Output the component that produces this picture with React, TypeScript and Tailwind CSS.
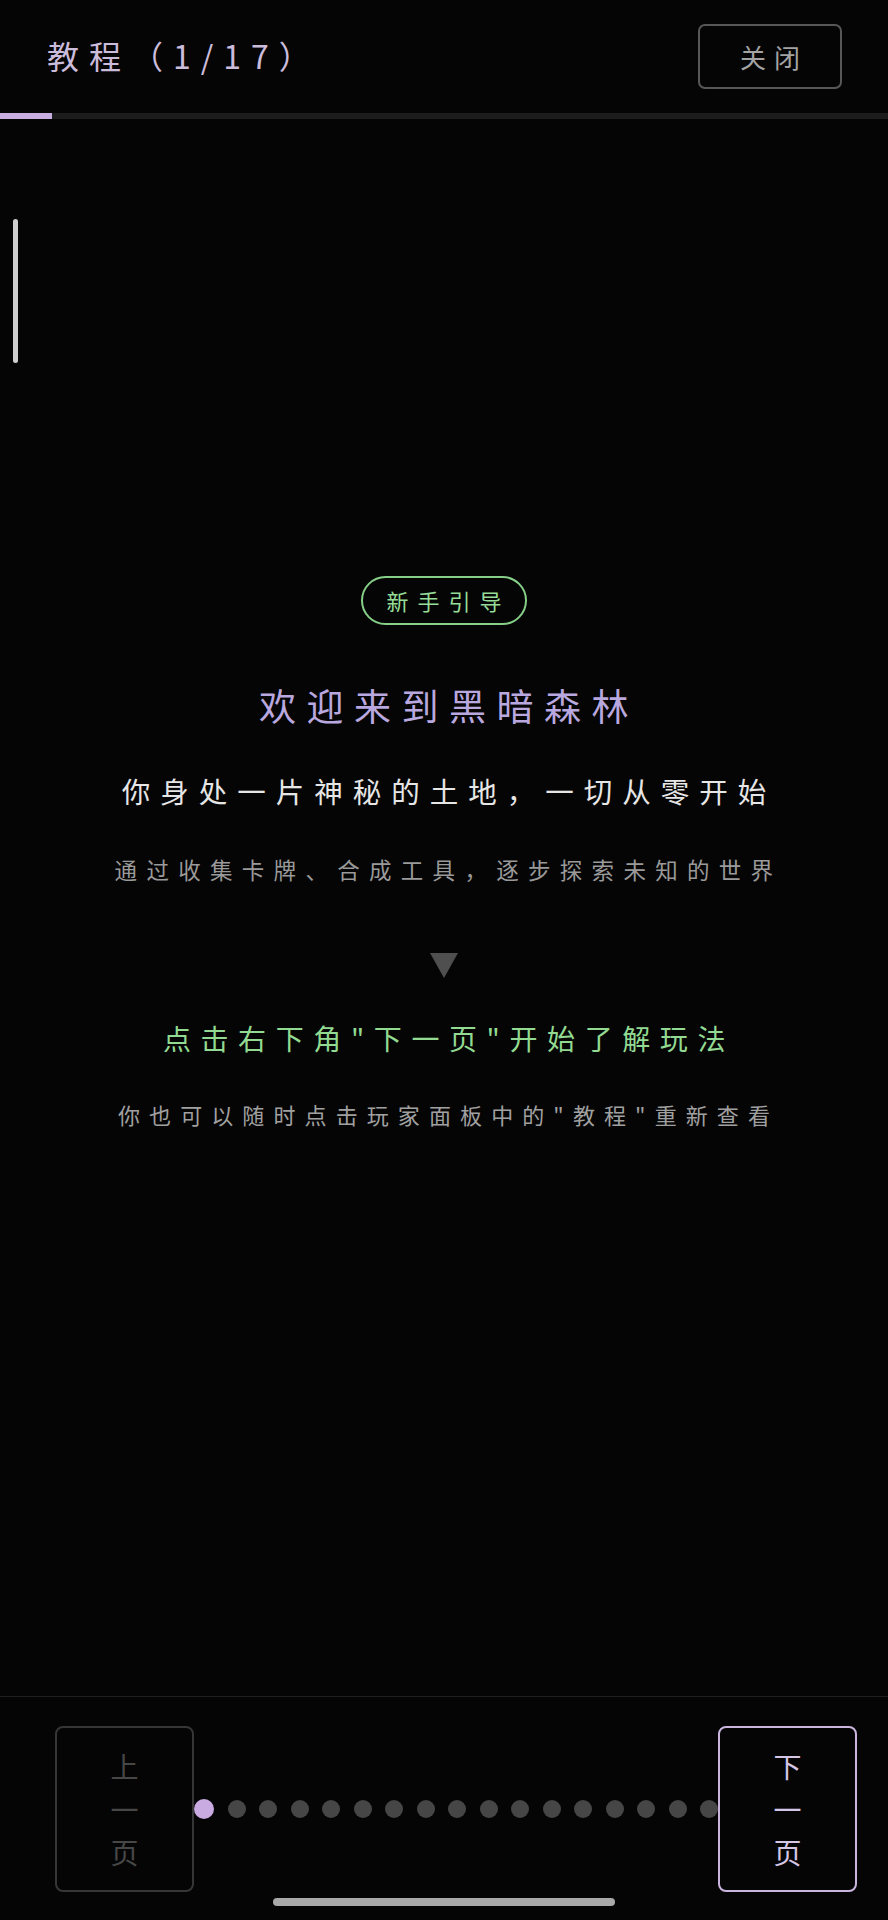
const TOTAL = 17;
const CURRENT = 1;

const cjk = '"Noto Sans CJK SC", "Noto Sans", sans-serif';

function StackedLabel({ text, className }: { text: string; className: string }) {
  return (
    <div className={`flex flex-col items-center text-[28px] leading-[43px] ${className}`}>
      {text.split('').map((ch, i) => (
        <span key={i}>{ch}</span>
      ))}
    </div>
  );
}

function PageDots({ total, current }: { total: number; current: number }) {
  return (
    <div className="flex min-w-0 flex-1 items-center gap-[13.5px] overflow-hidden">
      {Array.from({ length: total }, (_, i) =>
        i + 1 === current ? (
          <span key={i} className="h-[20px] w-[20px] shrink-0 rounded-full bg-[#c9abe2]" />
        ) : (
          <span key={i} className="h-[18px] w-[18px] shrink-0 rounded-full bg-[#464646]" />
        )
      )}
    </div>
  );
}

export default function App() {
  const progress = (CURRENT / TOTAL) * 100;

  return (
    <div className="relative flex h-[1920px] w-full flex-col overflow-hidden bg-[#050505]" style={{ fontFamily: cjk }}>
      {/* header */}
      <header className="flex h-[113px] items-center justify-between pl-[47px] pr-[46px]">
        <h1 className="-mt-[4px] text-[32px] tracking-[10px] text-[#cbbcdc]">
          教程（{CURRENT}/{TOTAL}）
        </h1>
        <button className="flex h-[65px] w-[144px] items-center justify-center rounded-[7px] border-2 border-[#575757] text-[26px] tracking-[8px] text-[#a3a3a3]">
          <span className="pl-[8px]">关闭</span>
        </button>
      </header>

      {/* progress track */}
      <div className="h-[6px] w-full bg-[#1c1c1c]">
        <div className="h-full bg-[#c8ade0]" style={{ width: `${progress}%` }} />
      </div>

      {/* page content */}
      <main className="relative flex flex-1 flex-col items-center pt-[457px]">
        <span className="absolute left-[13px] top-[100px] h-[144px] w-[5px] rounded-full bg-[#cfcfcf]" />

        <div className="flex h-[49px] w-[166px] items-center justify-center rounded-full border-2 border-[#86cf88] text-[22px] tracking-[9px] text-[#97dc98]">
          <span className="pl-[9px]">新手引导</span>
        </div>

        <h2 className="mt-[56px] text-[37px] leading-[48px] tracking-[10.5px] text-[#b9a8df]">
          <span className="pl-[10px]">欢迎来到黑暗森林</span>
        </h2>

        <p className="mt-[42px] text-[28.5px] leading-[40px] tracking-[10px] text-[#e6e6e6]">
          <span className="pl-[10px]">你身处一片神秘的土地，一切从零开始</span>
        </p>

        <p className="mt-[42px] text-[22.5px] leading-[32px] tracking-[9.3px] text-[#9a9a9a]">
          <span className="pl-[9px]">通过收集卡牌、合成工具，逐步探索未知的世界</span>
        </p>

        <svg className="mt-[68px]" width="28" height="25" viewBox="0 0 28 25">
          <polygon points="0,0 28,0 14,25" fill="#4f4f4f" />
        </svg>

        <p className="mt-[40px] text-[28px] leading-[40px] tracking-[9.6px] text-[#92da92]">
          <span className="pl-[10px]">点击右下角"下一页"开始了解玩法</span>
        </p>

        <p className="mt-[40px] text-[22px] leading-[32px] tracking-[9.1px] text-[#a0a0a0]">
          <span className="pl-[9px]">你也可以随时点击玩家面板中的"教程"重新查看</span>
        </p>
      </main>

      {/* footer navigation */}
      <footer className="flex h-[224px] items-start border-t border-[#1f1f1f] pl-[55px] pr-[31px] pt-[29px]">
        <div className="flex w-full items-center">
          <button className="flex h-[166px] w-[139px] shrink-0 items-center justify-center rounded-[8px] border-2 border-[#363636]">
            <StackedLabel text="上一页" className="text-[#474747]" />
          </button>
          <PageDots total={TOTAL} current={CURRENT} />
          <button className="flex h-[166px] w-[139px] shrink-0 items-center justify-center rounded-[8px] border-2 border-[#cbb5df]">
            <StackedLabel text="下一页" className="text-[#d6c6e6]" />
          </button>
        </div>
      </footer>

      {/* home indicator */}
      <span className="absolute bottom-[14px] left-[273px] h-[8px] w-[342px] rounded-full bg-[#a9a9a9]" />
    </div>
  );
}
